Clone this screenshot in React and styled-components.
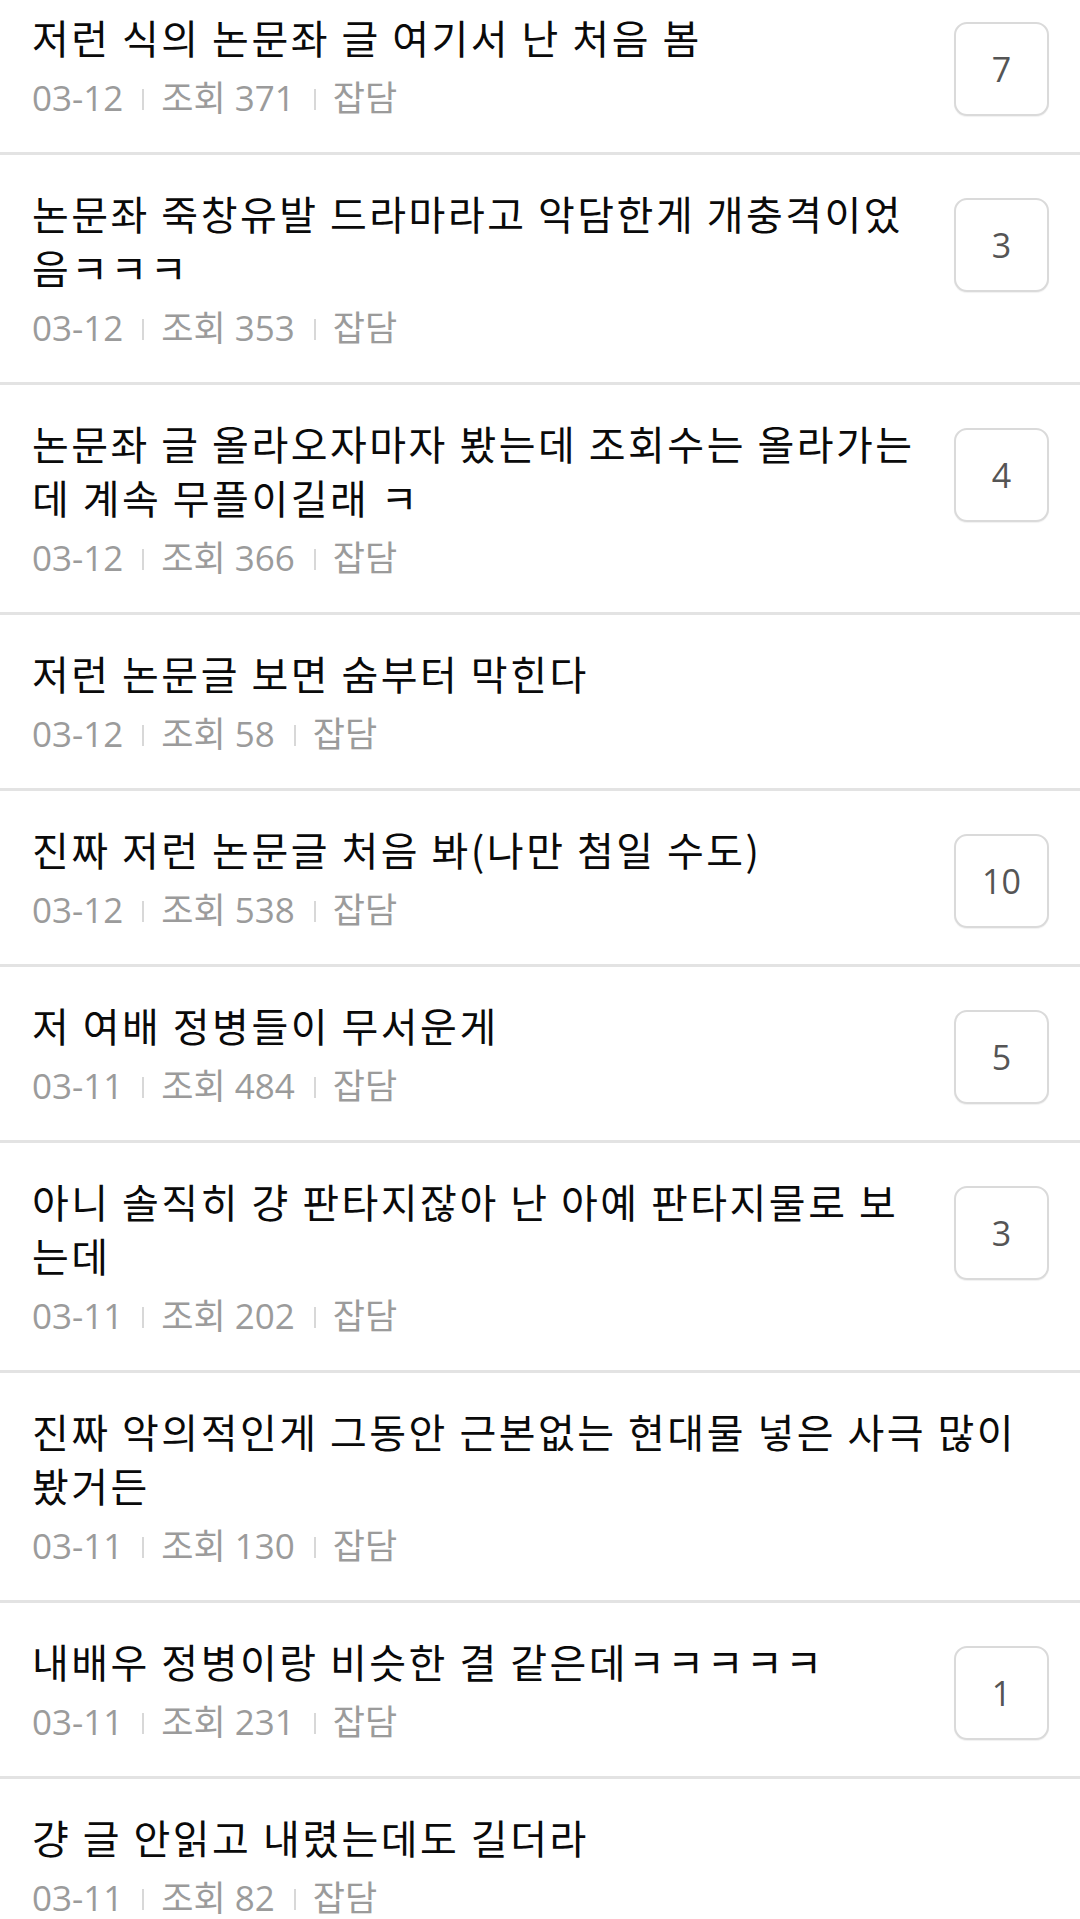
import React from "react";
import styled, { createGlobalStyle } from "styled-components";

const Global = createGlobalStyle`
  html, body { margin: 0; padding: 0; background: #ffffff; }
  body { font-family: "Noto Sans CJK KR", "Noto Sans", sans-serif; -webkit-font-smoothing: antialiased; }
  * { box-sizing: border-box; }
`;

const Page = styled.div`
  width: 1080px;
  height: 1919px;
  overflow: hidden;
  background: #fff;
`;

const List = styled.ul`
  list-style: none;
  margin: -21px 0 0;
  padding: 0;
`;

const Row = styled.li`
  display: flex;
  align-items: flex-start;
  gap: 28px;
  padding: 31px 31px 30px 32px;
  border-bottom: 3px solid #e3e3e3;
`;

const Body = styled.div`
  flex: 1;
  min-width: 0;
`;

const Title = styled.div`
  font-family: "Noto Sans CJK KR", sans-serif;
  font-size: 40px;
  line-height: 54px;
  letter-spacing: 2.5px;
  color: #0a0a0a;
`;

const Meta = styled.div`
  margin-top: 10px;
  font-family: "Open Sans", "Noto Sans CJK KR", sans-serif;
  font-size: 35px;
  line-height: 48px;
  color: #9b9b9b;
  display: flex;
  align-items: center;
  white-space: nowrap;
`;

const Sep = styled.span`
  display: inline-block;
  width: 2px;
  height: 21px;
  background: #d8d8d8;
  margin: 2px 17px 0 19px;
`;

const Badge = styled.div`
  flex: 0 0 auto;
  margin-top: 12px;
  width: 95px;
  height: 94px;
  border: 2px solid #dadada;
  border-radius: 13px;
  box-shadow: 0 1px 1px rgba(0, 0, 0, 0.06);
  display: flex;
  align-items: center;
  justify-content: center;
  font-family: "Open Sans", sans-serif;
  font-size: 34px;
  color: #555;
  background: #fff;
`;

const posts = [
  { title: "저런 식의 논문좌 글 여기서 난 처음 봄", date: "03-12", views: 371, count: 7 },
  { title: "논문좌 죽창유발 드라마라고 악담한게 개충격이었음ㅋㅋㅋ", date: "03-12", views: 353, count: 3 },
  { title: "논문좌 글 올라오자마자 봤는데 조회수는 올라가는데 계속 무플이길래 ㅋ", date: "03-12", views: 366, count: 4 },
  { title: "저런 논문글 보면 숨부터 막힌다", date: "03-12", views: 58 },
  { title: "진짜 저런 논문글 처음 봐(나만 첨일 수도)", date: "03-12", views: 538, count: 10 },
  { title: "저 여배 정병들이 무서운게", date: "03-11", views: 484, count: 5 },
  { title: "아니 솔직히 걍 판타지잖아 난 아예 판타지물로 보는데", date: "03-11", views: 202, count: 3 },
  { title: "진짜 악의적인게 그동안 근본없는 현대물 넣은 사극 많이 봤거든", date: "03-11", views: 130 },
  { title: "내배우 정병이랑 비슷한 결 같은데ㅋㅋㅋㅋㅋ", date: "03-11", views: 231, count: 1 },
  { title: "걍 글 안읽고 내렸는데도 길더라", date: "03-11", views: 82 },
];

export default function App() {
  return (
    <Page>
      <Global />
      <List>
        {posts.map((p, i) => (
          <Row key={i}>
            <Body>
              <Title>{p.title}</Title>
              <Meta>
                <span>{p.date}</span>
                <Sep />
                <span>조회 {p.views}</span>
                <Sep />
                <span>잡담</span>
              </Meta>
            </Body>
            {p.count != null && <Badge>{p.count}</Badge>}
          </Row>
        ))}
      </List>
    </Page>
  );
}
